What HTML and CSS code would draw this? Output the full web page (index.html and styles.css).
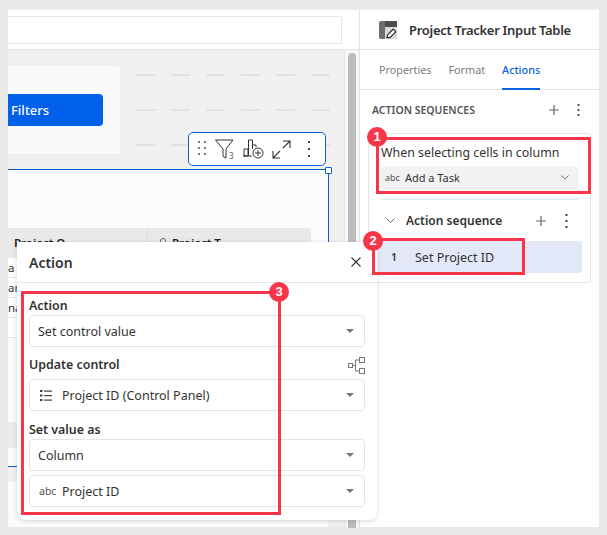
FILE: index.html
```html
<!DOCTYPE html>
<html lang="en">
<head>
<meta charset="utf-8">
<title>Project Tracker Input Table</title>
<link rel="stylesheet" href="styles.css">
</head>
<body>
<div class="window">
  <main class="main">
    <div class="topbar"><div class="search"></div></div>
    <div class="workspace">
      <div class="canvas">
        <div class="upper">
          <div class="filter-card"><div class="filter-btn">Filters</div></div>
          <div class="dashes">
            <div class="dash-row"><i></i><i></i><i></i><i></i><i></i><i></i></div>
            <div class="dash-row"><i></i><i></i><i></i><i></i><i></i><i></i></div>
            <div class="dash-row"><i></i><i></i><i></i><i></i><i></i><i></i></div>
          </div>
        </div>
        <div class="selected">
          <div class="handle"></div>
          <div class="table">
            <div class="thead">
              <div class="th th-a">Project O</div>
              <div class="th th-b">
                <svg class="lock" width="8" height="10" viewBox="0 0 8 10"><path d="M1.500 5V3a2.500 2.500 0 0 1 5 0v2M.5 5h7v4.500h-7z" fill="none" stroke="#666"/></svg>
                <span>Project T</span>
              </div>
            </div>
            <div class="tr">a</div>
            <div class="tr">an</div>
            <div class="tr">na</div>
            <div class="tr"></div>
          </div>
          <div class="band"></div>
        </div>
        <div class="next-card"></div>
        <div class="toolbar">
          <svg class="tool" width="8" height="16" viewBox="0 0 8 16"><g fill="#777"><rect x="0" y="0" width="2" height="2"/><rect x="6" y="0" width="2" height="2"/><rect x="0" y="6" width="2" height="2"/><rect x="6" y="6" width="2" height="2"/><rect x="0" y="12" width="2" height="2"/><rect x="6" y="12" width="2" height="2"/></g></svg>
          <svg class="tool" width="20" height="20" viewBox="0 0 20 20"><path d="M0.500 1h17.500l-7 9v9l-3-1.600v-7.400z" fill="none" stroke="#333" stroke-width="1"/><text x="14" y="19.500" class="tool-num">3</text></svg>
          <svg class="tool" width="21" height="20" viewBox="0 0 21 20"><g fill="none" stroke="#333" stroke-width="1"><path d="M1 17v-7h4v7zM5.500 17V1h4v9M10 6h3v2M0 17h9"/><circle cx="15" cy="14" r="5" fill="#fff"/><path d="M15 11v6M12 14h6"/></g></svg>
          <svg class="tool" width="19" height="19" viewBox="0 0 19 19"><g fill="none" stroke="#333" stroke-width="1.100"><path d="M11 1h7v7M18 1l-7 7M1 11v7h7M1 18l7-7"/></g></svg>
          <svg class="tool" width="4" height="16" viewBox="0 0 4 16"><g fill="#444"><rect x="1" y="0" width="2" height="2"/><rect x="1" y="7" width="2" height="2"/><rect x="1" y="14" width="2" height="2"/></g></svg>
        </div>
      </div>
      <div class="scrollbar"><div class="thumb"></div></div>
    </div>
  </main>
  <aside class="panel">
    <header class="panel-head">
      <svg width="18" height="18" viewBox="0 0 18 18"><rect x="0" y="0" width="18" height="18" rx="2" fill="#6e6e6e"/><rect x="6" y="0" width="12" height="6" fill="#4c4c4c"/><rect x="6" y="6" width="12" height="12" fill="#d9d9d9"/><path d="M8 17l.6-3.200 5.600-5.600 2.600 2.600-5.600 5.600z" fill="#fff" stroke="#222" stroke-width="1.200" stroke-linejoin="round"/></svg>
      <span class="panel-title">Project Tracker Input Table</span>
    </header>
    <nav class="tabs"><span class="tab">Properties</span><span class="tab">Format</span><span class="tab tab-active">Actions</span></nav>
    <div class="section-head">
      <span class="section-title">ACTION SEQUENCES</span>
      <span class="section-tools">
        <svg width="10" height="10" viewBox="0 0 10 10"><path d="M5 0v10M0 5h10" stroke="#666" stroke-width="1.200"/></svg>
        <svg width="3" height="12" viewBox="0 0 3 12"><g fill="#555"><rect x=".5" y="0" width="2" height="2"/><rect x=".5" y="5" width="2" height="2"/><rect x=".5" y="10" width="2" height="2"/></g></svg>
      </span>
    </div>
    <div class="seq-card">
      <div class="when">When selecting cells in column</div>
      <div class="column-select">
        <span class="abc">abc</span><span class="column-name">Add a Task</span>
        <svg width="8" height="5" viewBox="0 0 8 5"><path d="M.5.500 4 4 7.500.500" fill="none" stroke="#777"/></svg>
      </div>
      <div class="seq-head">
        <svg width="9" height="5" viewBox="0 0 9 5"><path d="M.5.500 4.500 4.500 8.500.500" fill="none" stroke="#666"/></svg>
        <span class="seq-title">Action sequence</span>
        <span class="seq-tools">
          <svg width="10" height="10" viewBox="0 0 10 10"><path d="M5 0v10M0 5h10" stroke="#666" stroke-width="1.200"/></svg>
          <svg width="3" height="14" viewBox="0 0 3 14"><g fill="#444"><rect x=".5" y="0" width="2" height="2"/><rect x=".5" y="6" width="2" height="2"/><rect x=".5" y="12" width="2" height="2"/></g></svg>
        </span>
      </div>
      <div class="seq-item"><span class="seq-num">1</span><span>Set Project ID</span></div>
    </div>
  </aside>

  <section class="modal">
    <div class="modal-head">
      <span class="modal-title">Action</span>
      <svg width="10" height="10" viewBox="0 0 10 10"><path d="M.5.500l9 9M9.500.500l-9 9" stroke="#333" stroke-width="1.100"/></svg>
    </div>
    <div class="modal-body">
      <div class="label">Action</div>
      <div class="select"><span>Set control value</span><b class="caret"></b></div>
      <div class="label label-icon">
        <span>Update control</span>
        <svg width="17" height="17" viewBox="0 0 17 17"><g fill="none" stroke="#777"><rect x=".5" y="6.500" width="4" height="4"/><rect x="11.500" y=".5" width="5" height="5"/><rect x="11.500" y="11.500" width="5" height="5"/><path d="M4.500 8.500h3M7.500 3v11M7.500 3h4M7.500 14h4"/></g></svg>
      </div>
      <div class="select">
        <svg class="list-icon" width="12" height="11" viewBox="0 0 12 11"><g fill="#444"><rect x="4" y="0.500" width="8" height="1.200"/><rect x="4" y="5" width="8" height="1.200"/><rect x="4" y="9.500" width="8" height="1.200"/><rect x="0" y="0" width="2.500" height="2"/><rect x="0" y="4.500" width="2.500" height="2"/><rect x="0" y="9" width="2.500" height="2"/></g></svg>
        <span>Project ID (Control Panel)</span><b class="caret"></b>
      </div>
      <div class="label label-spaced">Set value as</div>
      <div class="select"><span>Column</span><b class="caret"></b></div>
      <div class="select select-next"><span class="abc abc-modal">abc</span><span>Project ID</span><b class="caret"></b></div>
    </div>
  </section>

  <div class="mark mark-1"></div><div class="badge badge-1">1</div>
  <div class="mark mark-2"></div><div class="badge badge-2">2</div>
  <div class="mark mark-3"></div><div class="badge badge-3">3</div>
</div>
</body>
</html>
```
FILE: styles.css
```css
* { box-sizing: border-box; }
html, body { margin: 0; height: 100%; }
body {
  background: #e9e9e9;
  padding: 9px 8px 8px;
  font-family: "Noto Sans", sans-serif;
  color: #333;
  overflow: hidden;
}
.window { position: relative; display: flex; width: 591px; height: 518px; background: #fff; }
.main { width: 352px; display: flex; flex-direction: column; border-right: 1px solid #e4e4e4; }
.topbar { height: 41px; padding: 6px 17px 0 0; border-bottom: 1px solid #e4e4e4; background: #fff; border-top: 1px solid #eee; }
.search { height: 28px; border: 1px solid #e6e6e6; border-left: 0; border-radius: 0 2px 2px 0; }
.workspace { flex: 1; display: flex; min-height: 0; }
.canvas { position: relative; width: 336px; background: #f0f0f0; overflow: hidden; }
.upper { display: flex; height: 119px; padding-top: 16px; gap: 16px; }
.filter-card { width: 112px; height: 88px; background: #fafafa; border-radius: 0 4px 4px 0; padding-top: 28px; }
.filter-btn { width: 95px; height: 32px; background: #0060ec; color: #fff; border-radius: 0 4px 4px 0; font-size: 13px; font-weight: 500; line-height: 32px; padding-left: 3px; }
.dashes { display: flex; flex-direction: column; gap: 33px; padding-top: 8px; }
.dash-row { display: flex; gap: 16px; height: 2px; }
.dash-row i { width: 19px; background: #e2e2e2; }
.selected { position: relative; width: 321px; height: 298px; background: #fbfbfb; border-top: 1px solid #0a5fd9; border-right: 1px solid #0a5fd9; border-bottom: 1px solid #0a5fd9; padding-top: 58px; }
.handle { position: absolute; right: -4px; top: -3px; width: 7px; height: 7px; background: #fff; border: 1px solid #0a5fd9; border-radius: 1px; }
.table { width: 303px; }
.thead { display: flex; height: 30px; background: #e9e9e9; border-radius: 0 4px 0 0; font-size: 11.500px; font-weight: 600; color: #222; line-height: 30px; }
.th-a { width: 140px; padding-left: 6px; border-right: 1px solid #ddd; }
.th-b { display: flex; align-items: center; gap: 5px; padding-left: 11px; }
.tr { height: 20px; border-bottom: 1px solid #e6e6e6; background: #fff; font-size: 11.500px; line-height: 19px; }
.band { height: 26px; margin-top: 84px; background: #ececec; }
.next-card { height: 60px; margin-top: 15px; width: 320px; background: #fbfbfb; }
.toolbar { position: absolute; left: 180px; top: 82px; width: 138px; height: 34px; background: #fff; border: 1px solid #0a5fd9; border-radius: 5px; display: flex; align-items: center; padding-left: 9px; }
.tool { flex: none; }
.tool:nth-child(1) { margin-right: 9px; }
.tool:nth-child(2) { margin-right: 8px; }
.tool:nth-child(3) { margin-right: 8px; }
.tool:nth-child(4) { margin-right: 16px; }
.tool-num { font-size: 8px; fill: #555; font-family: "Noto Sans", sans-serif; }
.scrollbar { flex: 1; position: relative; background: #f8f8f8; padding: 3px 0 0 3px; border-left: 1px solid #e8e8e8; }
.thumb { width: 8px; height: 475px; background: #bdbdbd; border-radius: 4px 4px 0 0; }

.panel { flex: 1; display: flex; flex-direction: column; }
.panel-head { height: 41px; border-bottom: 1px solid #e4e4e4; border-top: 1px solid #eee; display: flex; align-items: center; gap: 12px; padding-left: 19px; }
.panel-title { font-size: 13px; font-weight: 600; color: #333; letter-spacing: -.3px; }
.tabs { height: 40px; border-bottom: 1px solid #e4e4e4; display: flex; gap: 17px; padding-left: 19px; }
.tab { font-size: 10.800px; color: #7c7c7c; line-height: 40px; height: 40px; }
.tab-active { color: #0b62e3; font-weight: 500; border-bottom: 2px solid #0b62e3; }
.section-head { display: flex; align-items: center; justify-content: space-between; height: 40px; margin: 0 0 3px 8px; padding: 0 19px 0 4px; }
.section-title { font-size: 10.500px; font-weight: 600; color: #555; }
.section-tools { display: flex; align-items: center; gap: 18px; }
.seq-card { margin: 0 8px; width: 223px; height: 150px; border: 1px solid #e6e6e6; border-radius: 4px; padding: 9px 12px 0; }
.when { font-size: 12.400px; color: #333; line-height: 20px; }
.column-select { display: flex; align-items: center; height: 24px; margin-top: 3px; background: #f2f2f2; border-radius: 4px; padding: 0 9px 2px 4px; }
.column-select svg { margin-left: auto; }
.abc { font-size: 9px; color: #555; }
.column-name { margin-left: 5px; font-size: 11px; color: #333; }
.seq-head { display: flex; align-items: center; height: 42px; margin-top: 9px; border-top: 1px solid #e4e4e4; padding-left: 5px; }
.seq-title { margin-left: 11px; font-size: 12px; font-weight: 600; color: #333; }
.seq-tools { margin-left: auto; display: flex; align-items: center; gap: 19px; padding-right: 10px; }
.seq-item { display: flex; align-items: center; height: 32px; width: 204px; margin-left: -3px; background: #e2e8f8; border-radius: 2px; font-size: 12.500px; color: #333; padding-left: 13px; }
.seq-num { width: 24px; font-size: 10.500px; font-weight: 600; }

.modal { position: absolute; left: 9px; top: 233px; width: 360px; height: 278px; background: #fff; border-radius: 0 0 8px 8px; box-shadow: 0 1px 5px rgba(0,0,0,.16); }
.modal-head { display: flex; align-items: center; justify-content: space-between; height: 41px; padding: 0 16px 0 12px; border-bottom: 1px solid #e4e4e4; }
.modal-title { font-size: 14px; font-weight: 600; color: #333; }
.modal-body { padding: 12px 12px 0; }
.label { font-size: 12.400px; font-weight: 600; color: #333; line-height: 22px; height: 20px; }
.label-icon { display: flex; justify-content: space-between; align-items: center; margin: 8px 0 4px; }
.label-spaced { margin-top: 8px; }
.select { display: flex; align-items: center; height: 32px; border: 1px solid #e4e4e4; border-radius: 4px; padding: 0 10px 0 8px; font-size: 12.500px; color: #333; }
.select-next { margin-top: 4px; }
.caret { margin-left: auto; width: 0; height: 0; border-left: 4px solid transparent; border-right: 4px solid transparent; border-top: 4px solid #777; }
.list-icon { margin: 0 10px 0 2px; }
.abc-modal { flex: none; width: 23px; margin-left: 1px; font-size: 10.500px; }

.mark { position: absolute; border: 3px solid #f93549; pointer-events: none; }
.mark-1 { left: 368px; top: 128px; width: 215px; height: 57px; }
.mark-2 { left: 364px; top: 229px; width: 153px; height: 37px; }
.mark-3 { left: 13px; top: 282px; width: 260px; height: 224px; }
.badge { position: absolute; width: 20px; height: 20px; border-radius: 50%; background: #f93549; color: #fff; font-size: 13px; font-weight: 700; line-height: 20px; text-align: center; font-family: "Liberation Sans", sans-serif; }
.badge-1 { left: 359px; top: 118px; }
.badge-2 { left: 355px; top: 222px; }
.badge-3 { left: 261px; top: 273px; }
```
